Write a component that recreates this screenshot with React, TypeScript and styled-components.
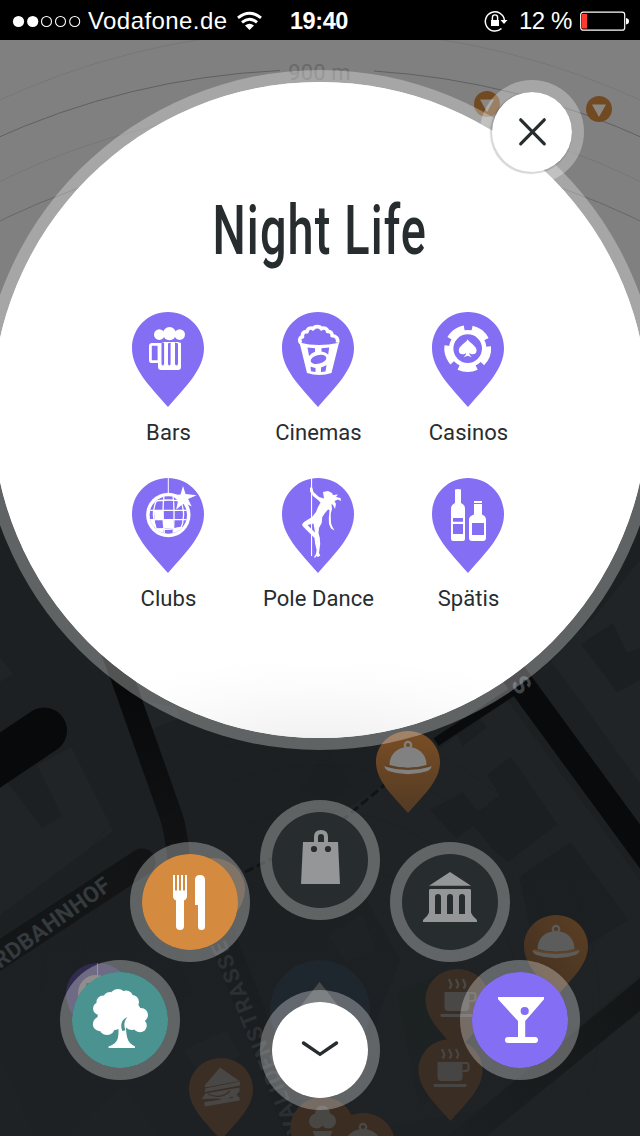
import React from "react";
import styled, { createGlobalStyle } from "styled-components";

const ink = "#272d2f";
const violet = "#846ef3";
const paper = "#ffffff";

const GlobalStyle = createGlobalStyle`
  *, *::before, *::after { box-sizing: border-box; }
  body { margin: 0; background: #1d2123; }
  button { border: 0; padding: 0; background: none; font: inherit; color: inherit; }
  svg { display: block; }
`;

const Screen = styled.div`
  position: relative;
  width: 640px;
  height: 1136px;
  overflow: hidden;
  background: #1c2022;
  font-family: Roboto, "Liberation Sans", sans-serif;
`;

const MapLayer = styled.svg`
  position: absolute;
  inset: 0;
`;

const Foreground = styled.div`
  position: relative;
  display: flex;
  flex-direction: column;
`;

/* ---------- status bar ---------- */

const StatusBar = styled.header`
  display: grid;
  grid-template-columns: 1fr auto 1fr;
  align-items: center;
  height: 40px;
  padding: 0 11px 0 12px;
  background: #000;
  color: #fff;
  font: 24px/40px "Liberation Sans", Arial, sans-serif;
`;

const StatusGroup = styled.div<{ $end?: boolean }>`
  display: flex;
  align-items: center;
  justify-content: ${(p) => (p.$end ? "flex-end" : "flex-start")};
  gap: 8px;
`;

const Carrier = styled.span`
  letter-spacing: 0.42px;
  margin: 0 2px 0 -1px;
  padding-top: 1px;
`;

const Clock = styled.span`
  padding: 1px 3px 0 0;
  font-size: 23.5px;
  font-weight: 700;
  letter-spacing: -0.4px;
`;

const Charge = styled.span`
  font-size: 24px;
  padding: 1px 0 0 3px;
  letter-spacing: -0.4px;
`;

/* ---------- category dialog ---------- */

const Bubble = styled.section`
  display: flex;
  flex-direction: column;
  align-items: center;
  width: 680px;
  height: 680px;
  margin: 30px -20px 0;
  padding-top: 119px;
  border: 12px solid rgba(255, 255, 255, 0.3);
  border-radius: 50%;
  background: radial-gradient(ellipse 46% 16% at 50% 104%, #e6e7e7 0%, #f4f4f4 35%, #fcfcfc 75%, #fff 100%) padding-box,
    #fff padding-box;
  background-clip: padding-box;
`;

const Title = styled.h1`
  margin: 0;
  color: ${ink};
  font: 500 69px/60px Roboto, sans-serif;
  letter-spacing: 1.6px;
  white-space: nowrap;
  transform: scaleX(0.68);
`;

const Categories = styled.div`
  display: grid;
  grid-template-columns: repeat(3, 150px);
  grid-auto-rows: 166px;
  margin: 51px 4px 0 0;
`;

const Category = styled.button`
  display: flex;
  flex-direction: column;
  align-items: center;
`;

const CategoryName = styled.span`
  margin: 12px 0 0 1px;
  color: ${ink};
  font-size: 22px;
  line-height: 28px;
  letter-spacing: 0.07px;
  white-space: nowrap;
`;

const CloseButton = styled.button`
  position: absolute;
  top: 80px;
  left: 480px;
  width: 104px;
  height: 104px;
  border-radius: 50%;
  border: 12px solid rgba(255, 255, 255, 0.3);
  background: #fff padding-box;
  &::before {
    content: "";
    position: absolute;
    inset: 0;
    border-radius: 50%;
    box-shadow: -1px 1px 1px 1px rgba(0, 0, 0, 0.16);
  }
  svg { position: relative; margin: -12px; }
`;

/* ---------- radial menu ---------- */

const RadialMenu = styled.nav`
  display: flex;
  flex-direction: column;
  align-items: center;
  margin-top: 50px;
`;

const UpperArc = styled.div`
  display: flex;
  align-items: flex-end;
  gap: 10px;
  height: 162px;
`;

const LowerArc = styled.div`
  display: flex;
  align-items: flex-start;
  gap: 80px;
  margin-top: -2px;
`;

const RoundButton = styled.button<{ $fill: string; $raise?: number; $drop?: number }>`
  flex: none;
  width: 120px;
  height: 120px;
  margin-bottom: ${(p) => p.$raise ?? 0}px;
  margin-top: ${(p) => p.$drop ?? 0}px;
  border: 12px solid rgba(255, 255, 255, 0.3);
  border-radius: 50%;
  background: ${(p) => p.$fill} padding-box;
  svg { margin: -12px; }
`;

/* ---------- category glyphs, drawn in the 72x95 pin ---------- */

const pinPath = "M36 0C16 0 0 16 0 36C0 57 17 73 36 95C55 73 72 57 72 36C72 16 56 0 36 0Z";

const BeerGlyph = () => (
  <g fill={paper}>
    <circle cx="27.3" cy="22.6" r="5.3" />
    <circle cx="37.5" cy="21.6" r="6.6" />
    <circle cx="47.7" cy="22.6" r="5.3" />
    <path d="M26 31h3.5l3 -1h13l3.500 1v24q0 3 -3 3h-17q-3 0 -3 -3z" />
    <rect x="18.4" y="32.3" width="8.600" height="17.400" rx="1.800" fill={violet} stroke={paper} strokeWidth="2.800" />
    <path d="M29.500 31v20.500q0 2 1.300 2q1.300 0 1.300 -2V31zM36 31.500v20q0 2 1.300 2q1.300 0 1.300 -2v-21zM43 30.500v21q0 2 1.500 2q1.500 0 1.500 -2v-20z" fill={violet} />
  </g>
);

const PopcornGlyph = () => (
  <g>
    <path
      d="M19 31c-2.500-2.500-1-6 1.500-6c-.8-4 2-6 4.500-5.200c.3-3.500 4-4.600 6-3c1.800-3 7-2.800 8.300 0c3-1.800 6 0 6.200 2.600c3-.5 5 1.800 4.600 4.300c3.700-.3 6.400 2.800 5.400 7"
      fill={violet} stroke={paper} strokeWidth="3.600" strokeLinejoin="round"
    />
    <path d="M17.500 30.500q18.500 5 39.500 0.200L49.500 61q-12 4 -24.500 0z" fill={paper} />
    <path d="M25.500 35.500l7.500 .8v3.500q-3 1 -6 4.200zM39.500 36.300l7.700 -.8l-1 7q-2.700 -2.500 -6.700 -3zM28.500 54.800l5 1.200v4l-4.500 -.8zM39 55.500l5.500 -2.300l-1 6.200l-4.500 .7z" fill={violet} />
    <ellipse cx="36.500" cy="47.400" rx="8" ry="4.300" transform="rotate(-14 36.500 47.400)" fill={violet} />
  </g>
);

const ChipGlyph = () => (
  <g>
    <circle cx="35.700" cy="36.600" r="16.500" fill="none" stroke={paper} strokeWidth="4.400" />
    <circle cx="35.700" cy="36.600" r="20.700" fill="none" stroke={paper} strokeWidth="5.400" strokeDasharray="18.300 7.713" transform="rotate(64.700 35.700 36.600)" />
    <path d="M35.700 27.300c2 3.800 8.900 6.700 8.900 11.200c0 4.200-5 5-7.400 2.300c.3 2 1.200 3.400 2.600 4.400l-4.100-1.400l-4.100 1.400c1.400-1 2.300-2.400 2.600-4.400c-2.400 2.700-7.400 1.900-7.400-2.300c0-4.500 6.900-7.400 8.900-11.200z" fill={paper} />
  </g>
);

const DiscoGlyph = () => (
  <g>
    <path d="M36.300 0V16" stroke={paper} strokeWidth="1" />
    <circle cx="36.300" cy="37" r="22.200" fill={paper} />
    <circle cx="36.300" cy="37" r="18.700" fill={violet} />
    <clipPath id="ball"><circle cx="36.300" cy="37" r="18.700" /></clipPath>
    <g clipPath="url(#ball)">
      <path d="M22 32.500h9.500v9H22.500zM31.500 42h10v8.500h-9.500zM22.500 51l9 -1v7l-7 -2zM42 50l8 -1.500l-3 7h-5zM17 41.500h5.500l1.500 8h-5z" fill={paper} />
      <g fill="none" stroke={paper} strokeWidth="1.300">
        <path d="M18 24.500q18 -5 37 0M16 32.300h41M16 41.600h41M18 50q18 3 37 -1M32 18c-1.200 10-1.200 26 .5 38M41 18c1.400 10 1.400 28 0 38M25 21c-4.500 10-4.500 22 0 32M48 21c4.500 10 4.500 22 0 32" />
      </g>
    </g>
    <path d="M51 8l2.600 8l11 1.300l-8.500 3.600l3.600 7.500l-7.500-3.400l-8 6.600l1.800-8.800l-6-5.600l8.500-.8z" fill={paper} />
  </g>
);

const DancerGlyph = () => (
  <g fill={paper}>
    <rect x="29" y="0" width="1.100" height="78" />
    <path d="M28 9.500H30.200L31.500 14L37 19L42 20.500L41 14L46 13L50 15L51 17L56 16.500L54 19L58.500 20L59 23L56 21.500L52.500 23L54 26L53 31L51 27L49.500 26L50 31L48.700 36L49 45L50 48L52.500 52.500L49 50.500L47 46L46.800 40L47.500 32L46 31.500L43 35L40.300 39L39.700 45L37 50L36.500 55L37.800 60L38.200 66L37 75L38.300 77.500L36 79L34.300 78L33 80L32 79L34 76L34.600 72L33 65L32.500 60L27.500 55L21 48.500L20 46.500L22 44L30 39L34 34L36 29L38.500 24.500L36 22L31 18L28 13.500Z" />
    <path d="M25.500 47L31.500 45.500L33 54.500Z" fill={violet} />
    <rect x="29" y="44" width="1.100" height="10" />
  </g>
);

const BottlesGlyph = () => (
  <g>
    <path d="M23 11.500q3-1 6 0V25c3 1.500 4 3 4 6v30q0 2-2 2H21q-2 0-2-2V31c0-3 1-4.500 4-6zM42 23h8v2h-8zM42 26h8v10.500q4 1.500 4 5V60q0 3-3 3H40q-3 0-3-3V41.500q0-3.500 5-5z" fill={paper} />
    <path d="M21 40h10v3.700H21zM21 46h10v10H21zM40 45h12v12H40z" fill={violet} />
  </g>
);

const CategoryPin = ({ children }: { children: React.ReactNode }) => (
  <svg width="72" height="95" viewBox="0 0 72 95">
    <path d={pinPath} fill={violet} />
    {children}
  </svg>
);

const categories = [
  { name: "Bars", glyph: <BeerGlyph /> },
  { name: "Cinemas", glyph: <PopcornGlyph /> },
  { name: "Casinos", glyph: <ChipGlyph /> },
  { name: "Clubs", glyph: <DiscoGlyph /> },
  { name: "Pole Dance", glyph: <DancerGlyph /> },
  { name: "Spätis", glyph: <BottlesGlyph /> },
];

/* ---------- menu icons, drawn in the 120px button ---------- */

const MenuIcon = ({ children, size = 120 }: { children: React.ReactNode; size?: number }) => (
  <svg width={size} height={size} viewBox={`0 0 ${size} ${size}`}>{children}</svg>
);

const CutleryIcon = () => (
  <MenuIcon>
    <path d="M43 33h2v15.500h2V33h2v15.500h2V33h2v15.500h2V33h2v21q0 3-3 4.500V84q0 4-4 4t-4-4V58.500q-3-1.500-3-4.500z" fill={paper} />
    <path d="M65 63V38q0-5 5-5t5 5V84.500q0 3.500-3.500 3.500T68 84.500V63z" fill={paper} />
  </MenuIcon>
);

const BagIcon = () => (
  <MenuIcon>
    <path d="M56 43v-6q0-5 5-5t5 5v6" fill="none" stroke="#949698" strokeWidth="4" />
    <path d="M43 42h35l2 42H41z" fill="#949698" />
    <circle cx="54" cy="49" r="3.100" fill={ink} />
    <circle cx="68" cy="49" r="3.100" fill={ink} />
  </MenuIcon>
);

const MuseumIcon = () => (
  <MenuIcon>
    <path d="M60 30L81 43.700H39zM40 47h40l1 1v22.500q1 3 6 7.500v2H33v-2q5-4.500 6-7.500V48z" fill="#949698" />
    <path d="M45 72V55q0-3 3-3t3 3v17zM57 72V55q0-3 3-3t3 3v17zM69 72V55q0-3 3-3t3 3v17z" fill={ink} />
  </MenuIcon>
);

const TreeIcon = () => (
  <MenuIcon>
    <g fill={paper}>
      <circle cx="58" cy="37" r="8" />
      <circle cx="50" cy="39" r="7" />
      <circle cx="66" cy="37.500" r="7" />
      <circle cx="72" cy="42" r="7" />
      <circle cx="43" cy="42" r="6.500" />
      <circle cx="39.500" cy="48.500" r="6.500" />
      <circle cx="40" cy="64" r="7.200" />
      <circle cx="47" cy="67" r="8" />
      <circle cx="55" cy="64" r="6" />
      <circle cx="81" cy="55" r="7" />
      <circle cx="80" cy="65.500" r="6.800" />
      <circle cx="72" cy="62" r="8" />
      <path d="M40 42L58 33L75 40L83 52L80 68L66 60L62 66L44 68L37 60Z" />
      <path d="M58.500 62h7.500c0 14 .5 20.500 9 24.500V88H48.500v-1.500C58 83.500 58.500 78 58.500 70z" />
    </g>
    <path d="M67.500 57.300C62 59 59.800 64.500 62.300 71L65.500 70.200C63.600 65.500 64 60.500 67.500 57.300z" fill="#4a9391" />
  </MenuIcon>
);

const CocktailIcon = () => (
  <MenuIcon>
    <path d="M38 37h46v2.300L65.200 61v16H75q3 0 3 3t-3 3H48q-3 0-3-3t3-3h10V61L38 39.300z" fill={paper} />
    <circle cx="64.700" cy="51" r="4.100" fill={violet} />
  </MenuIcon>
);

const ChevronIcon = () => (
  <MenuIcon>
    <path d="M43.500 53L60 64.300L76.500 53" fill="none" stroke={ink} strokeWidth="3.400" strokeLinecap="round" />
  </MenuIcon>
);

/* ---------- map ---------- */

type GlyphName = "dome" | "cup" | "sandwich" | "ice" | "ball" | "none";

const MapGlyph = ({ kind }: { kind: GlyphName }) => {
  if (kind === "dome")
    return (
      <g>
        <circle cx="32" cy="14" r="3.200" fill="none" stroke="currentColor" strokeWidth="2.200" />
        <path d="M13.500 34c0-24 37-24 37 0q-18.500 5.500-37 0z" fill="currentColor" />
        <path d="M8.500 35q23.500 6 47 0q0 3-4 5q-19.500 6.500-39 0q-4-2-4-5z" fill="currentColor" />
        <path d="M10 34.800q22 6.500 44 0" fill="none" stroke="#5f4326" strokeWidth="2" />
      </g>
    );
  if (kind === "cup")
    return (
      <g fill="currentColor">
        <path d="M19 23h25v15q0 4-4 4H23q-4 0-4-4zM15 45h33v1.500q0 1.500-1.500 1.500h-30q-1.500 0-1.500-1.500z" />
        <path d="M44 24h4q2 0 2 2.500v3q0 2.500-3 2.500h-3" fill="none" stroke="currentColor" strokeWidth="2.200" />
        <path d="M23.500 10q1 3 2 4.500q1 2-1.500 5M30.500 10q1 3 2 4.500q1 2-1.500 5M37.500 10q1 3 2 4.500q1 2-1.500 5" fill="none" stroke="currentColor" strokeWidth="2.300" />
      </g>
    );
  if (kind === "sandwich")
    return (
      <g fill="currentColor">
        <path d="M31 9.500L50.500 23L16 29.500v-2.500zM16 30.500L51 23.500v4L16 34zM12.500 41l4-5.500l34-6v4l-3 3l3 4v2l-3-1l-5-3q-5 5-14 2zM15.500 44l35-5v3.500l-35 6z" />
        <path d="M19 36q12 6 22-3" fill="none" stroke="#3b2e25" strokeWidth="1.200" />
      </g>
    );
  if (kind === "ice")
    return (
      <g fill="currentColor">
        <circle cx="26" cy="24" r="7.500" /><circle cx="38" cy="24" r="7.500" /><circle cx="32" cy="16" r="7.500" />
        <path d="M22 34h20L32 58z" />
      </g>
    );
  if (kind === "ball")
    return (
      <g>
        <path d="M31.500 0v14" stroke="#6b6780" strokeWidth="1" />
        <circle cx="30" cy="30" r="18" fill="#605c5c" />
        <path d="M20 20h8v5h-8zM34 17h8v5h-8z" fill="#3c3560" />
      </g>
    );
  return null;
};

const MapPin = ({ x, y, fill, glyph, kind }: { x: number; y: number; fill: string; glyph: string; kind: GlyphName }) => (
  <g transform={`translate(${x} ${y})`} color={glyph}>
    <path d={pinPath} transform="scale(.889 .863)" fill={fill} />
    <MapGlyph kind={kind} />
  </g>
);

const OffscreenMarker = ({ x, y }: { x: number; y: number }) => (
  <g transform={`translate(${x} ${y})`}>
    <circle r="13" fill="#714a22" />
    <path d="M-7 -4.500H7L0 8z" fill="#8a8784" />
  </g>
);

const StreetMap = () => (
  <MapLayer width="640" height="1136" viewBox="0 0 640 1136">
    <defs>
      <linearGradient id="amber" x1="0" y1="0" x2="0" y2="1">
        <stop offset="0" stopColor="#7a4e24" /><stop offset="1" stopColor="#523a24" />
      </linearGradient>
      <linearGradient id="amberSide" x1="0" y1="1" x2="1" y2="0">
        <stop offset="0" stopColor="#402f22" /><stop offset="1" stopColor="#5c3f22" />
      </linearGradient>
      <linearGradient id="eastRoad" x1="450" y1="0" x2="640" y2="0" gradientUnits="userSpaceOnUse">
        <stop offset="0" stopColor="#191c1e" /><stop offset="1" stopColor="#0e1011" />
      </linearGradient>
      <linearGradient id="northRoad" x1="0" y1="690" x2="0" y2="860" gradientUnits="userSpaceOnUse">
        <stop offset="0" stopColor="#08090a" /><stop offset="1" stopColor="#111314" />
      </linearGradient>
      <linearGradient id="haze" x1="0" y1="0" x2="0" y2="1">
        <stop offset="0" stopColor="#1e2224" stopOpacity="0" /><stop offset="1" stopColor="#1e2224" stopOpacity=".6" />
      </linearGradient>
    </defs>

    <g fill="#202427">
      <path d="M0 657L13 674L0 682z" />
      <path d="M0 786L7 782L42 828L62 816L37 765L71 747L113 831L0 915z" />
      <path d="M141 700L176 707L180 718L151 730z" />
      <path d="M505 697L640 880V975L480 1110L330 1136L400 960L350 870L345 810L440 748z" opacity=".75" />
      <path d="M551 661L600 610L640 560V783z" />
      <path d="M184 1050L226 1030L240 1056L200 1075z" />
      <path d="M640 1012V1136H485z" />
      <path d="M0 1060L35 1136H0zM70 1136L122 1085L158 1136z" opacity=".6" />
      <path d="M328 935L362 915L376 950L346 962z" opacity=".6" />
    </g>
    <g fill="#1b1f21">
      <path d="M581 644L613 623L627 653L640 648V680L617 692z" />
      <path d="M455 731L478 716L487 727L463 746z" />
      <path d="M455 797L463 792L478 812L500 795L487 775L511 757L557 824L508 862L492 848L474 826L456 838L430 810z" />
      <path d="M519 877L571 842L628 920L541 975z" />
      <path d="M326 750L352 785L330 800L300 790z" />
      <path d="M397 992L450 970L480 1040L420 1110z" opacity=".6" />
      <path d="M162 975L178 964L192 992L170 1003z" />
    </g>

    <g fill="none">
      <path d="M-40 787L44 730.500" stroke="#08090b" strokeWidth="46" strokeLinecap="round" />
      <path d="M108 640L123 680L170 813Q176 828 180 870" stroke="url(#northRoad)" strokeWidth="23" />
      <path d="M-20 968L142 862" stroke="#111314" strokeWidth="27" strokeLinecap="round" />
      <path d="M436 742L518 688" stroke="#090b0c" strokeWidth="9" />
      <path d="M388 782L340 822M300 845L235 877" stroke="#111415" strokeWidth="3" strokeDasharray="9 4" />
      <path d="M660 978L450 1150" stroke="url(#eastRoad)" strokeWidth="25" />
      <path d="M200 880L300 1136" stroke="#191c1e" strokeWidth="27" />
      <g stroke="#191d1f" strokeWidth="1" opacity=".3">
        <circle cx="320" cy="1010" r="150" /><circle cx="320" cy="1010" r="200" />
        <circle cx="320" cy="1010" r="245" /><circle cx="320" cy="1010" r="280" />
      </g>
    </g>
    <path d="M0 850H640V1136H0z" fill="url(#haze)" />
    <path d="M510 669L655 867" stroke="#090a0c" strokeWidth="26" />

    <g fill="#343a3e" fontFamily="Roboto, sans-serif" fontWeight="700" fontSize="22">
      <text transform="translate(0 969) rotate(-35.500)" letterSpacing=".5" fontSize="22.500">RDBAHNHOF</text>
      <text transform="translate(302 1130) rotate(-112)" letterSpacing="1.600" fill="#2a2f32">VALIDENSTRASSE</text>
      <text transform="translate(510 684) rotate(52)" fontSize="25" fill="#3d4548">S</text>
    </g>

    <circle cx="320" cy="1010" r="50" fill="#1f272e" />
    <path d="M319.500 982L340 1008H299z" fill="#464b4e" />

    <MapPin x={376} y={731} fill="url(#amber)" glyph="#818181" kind="dome" />
    <MapPin x={181} y={858} fill="#4a3727" glyph="#555" kind="none" />
    <MapPin x={524} y={915} fill="url(#amberSide)" glyph="#5b5c5b" kind="dome" />
    <MapPin x={66} y={963} fill="#322b50" glyph="#666" kind="ball" />
    <MapPin x={425.500} y={969} fill="#3a2d24" glyph="#4a4846" kind="cup" />
    <MapPin x={418.500} y={1039} fill="#3a2d24" glyph="#474543" kind="cup" />
    <MapPin x={189} y={1058} fill="#3b2e25" glyph="#484746" kind="sandwich" />
    <MapPin x={290.500} y={1097} fill="#3b2d22" glyph="#494744" kind="ice" />
    <MapPin x={331} y={1113} fill="#3b2d22" glyph="#4b4946" kind="dome" />

    <path d="M0 40H640V420H0z" fill="#808080" />
    <g fill="none" strokeWidth="1">
      <circle cx="320" cy="798" r="768" stroke="#777" />
      <path d="M-10 141A787 787 0 0 1 280 70.500M374 71A787 787 0 0 1 650 141" stroke="#606060" />
      <circle cx="320" cy="832" r="725" stroke="#777" />
      <circle cx="320" cy="877" r="730" stroke="#676767" />
    </g>
    <text x="319.500" y="80" textAnchor="middle" fontFamily="Roboto, sans-serif" fontSize="22" letterSpacing=".1" fill="#6a6a6a">900 m</text>
    <OffscreenMarker x={487} y={104} />
    <OffscreenMarker x={599} y={109} />
  </MapLayer>
);

/* ---------- status glyphs ---------- */

const SignalDots = () => (
  <svg width="69" height="14" viewBox="0 0 69 14">
    {[6.500, 20.700].map((x) => <circle key={x} cx={x} cy="7.500" r="5.600" fill="#fff" />)}
    {[34.500, 48.500, 62.700].map((x) => <circle key={x} cx={x} cy="7.500" r="5" fill="none" stroke="#fff" strokeWidth="1.100" />)}
  </svg>
);

const WifiGlyph = () => (
  <svg width="25" height="20" viewBox="0 0 25 20">
    <g fill="none" stroke="#fff" strokeWidth="2.900">
      <path d="M1 6.800Q12.500 -2.500 24 6.800" /><path d="M5 11.300Q12.500 5 20 11.300" />
    </g>
    <path d="M8 14.600Q12.500 11 17 14.600L12.500 19z" fill="#fff" />
  </svg>
);

const RotationLock = () => (
  <svg width="24" height="22" viewBox="0 0 24 22">
    <path d="M17.500 18.500A9.600 9.600 0 1 1 20.400 10" fill="none" stroke="#fff" strokeWidth="1.500" />
    <path d="M16.500 10h7L20 14z" fill="#fff" />
    <path d="M7 10h8v6H7z" fill="#fff" />
    <path d="M8.400 10V7.500a2.600 2.600 0 0 1 5.200 0V10" fill="none" stroke="#fff" strokeWidth="1.400" />
  </svg>
);

const Battery = () => (
  <svg width="49" height="20" viewBox="0 0 49 20">
    <rect x=".700" y="1.200" width="44" height="18" rx="2.500" fill="none" stroke="#fff" strokeWidth="1.200" />
    <path d="M46 7q3 .5 3 3.200t-3 3.300z" fill="#fff" />
    <rect x="2" y="3" width="5" height="14.500" fill="#ff3b2f" />
  </svg>
);

export default function App() {
  return (
    <>
      <GlobalStyle />
      <Screen>
        <StreetMap />
        <Foreground>
          <StatusBar>
            <StatusGroup>
              <SignalDots />
              <Carrier>Vodafone.de</Carrier>
              <WifiGlyph />
            </StatusGroup>
            <Clock>19:40</Clock>
            <StatusGroup $end>
              <RotationLock />
              <Charge>12 %</Charge>
              <Battery />
            </StatusGroup>
          </StatusBar>

          <Bubble>
            <Title>Night Life</Title>
            <Categories>
              {categories.map((c) => (
                <Category key={c.name}>
                  <CategoryPin>{c.glyph}</CategoryPin>
                  <CategoryName>{c.name}</CategoryName>
                </Category>
              ))}
            </Categories>
          </Bubble>

          <RadialMenu>
            <UpperArc>
              <RoundButton $fill="#d58b3f"><CutleryIcon /></RoundButton>
              <RoundButton $fill={ink} $raise={42}><BagIcon /></RoundButton>
              <RoundButton $fill={ink}><MuseumIcon /></RoundButton>
            </UpperArc>
            <LowerArc>
              <RoundButton $fill="#4a9391"><TreeIcon /></RoundButton>
              <RoundButton $fill={paper} $drop={30}><ChevronIcon /></RoundButton>
              <RoundButton $fill={violet}><CocktailIcon /></RoundButton>
            </LowerArc>
          </RadialMenu>
        </Foreground>

        <CloseButton aria-label="Close">
          <MenuIcon size={104}>
            <path d="M40.700 39.800L64.300 63.800M64.300 39.800L40.700 63.800" stroke={ink} strokeWidth="3.200" strokeLinecap="round" />
          </MenuIcon>
        </CloseButton>
      </Screen>
    </>
  );
}
